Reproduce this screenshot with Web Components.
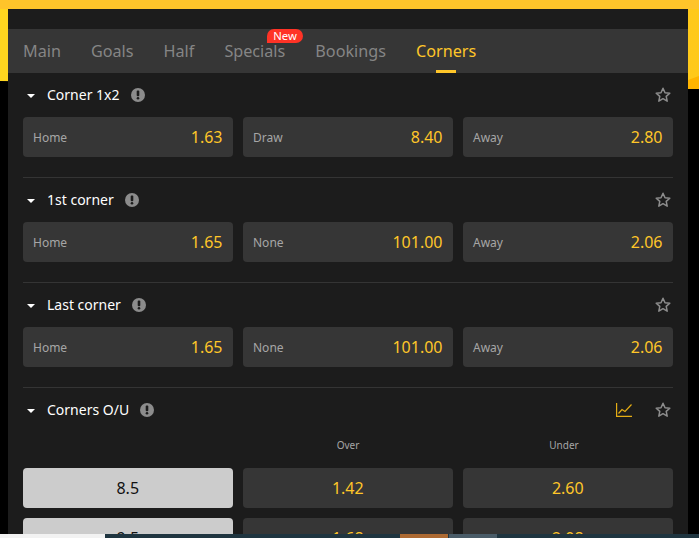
<!DOCTYPE html>
<html>
<head>
<meta charset="utf-8">
<title>Corners</title>
<style>
  html, body { margin: 0; padding: 0; height: 100%; overflow: hidden; background: #000; }
  body { font-family: "Noto Sans", "Open Sans", sans-serif; }
</style>
</head>
<body>
<match-page>
  <market-tabs></market-tabs>
  <market-group name="Corner 1x2">
    <odds-row>
      <odds-cell label="Home" value="1.63"></odds-cell>
      <odds-cell label="Draw" value="8.40"></odds-cell>
      <odds-cell label="Away" value="2.80"></odds-cell>
    </odds-row>
  </market-group>
  <market-group name="1st corner">
    <odds-row>
      <odds-cell label="Home" value="1.65"></odds-cell>
      <odds-cell label="None" value="101.00"></odds-cell>
      <odds-cell label="Away" value="2.06"></odds-cell>
    </odds-row>
  </market-group>
  <market-group name="Last corner">
    <odds-row>
      <odds-cell label="Home" value="1.65"></odds-cell>
      <odds-cell label="None" value="101.00"></odds-cell>
      <odds-cell label="Away" value="2.06"></odds-cell>
    </odds-row>
  </market-group>
  <market-group name="Corners O/U" chart last>
    <odds-row heads>
      <span></span><span>Over</span><span>Under</span>
    </odds-row>
    <odds-row>
      <odds-cell line value="8.5"></odds-cell>
      <odds-cell value="1.42"></odds-cell>
      <odds-cell value="2.60"></odds-cell>
    </odds-row>
    <odds-row>
      <odds-cell line value="9.5"></odds-cell>
      <odds-cell value="1.68"></odds-cell>
      <odds-cell value="2.08"></odds-cell>
    </odds-row>
  </market-group>
</match-page>
<script>
class MatchPage extends HTMLElement {
  constructor() {
    super();
    this.attachShadow({mode: "open"});
    this.shadowRoot.innerHTML = `
    <style>
      :host { display: block; position: relative; height: 538px; overflow: hidden; background: #000; }
      .hero {
        position: absolute; left: 0; top: 0; width: 100%; height: 90px;
        background: linear-gradient(#ffc42a 9px, transparent 9px), linear-gradient(to right, #ffd61f, #ffc91a);
        clip-path: polygon(0 0, 100% 0, 100% 89px, 0 81px);
      }
      .hero::after {
        content: ""; position: absolute; inset: 0; background: #ffb400;
        clip-path: polygon(688px 80px, 699px 76px, 699px 90px, 688px 90px);
      }
      .panel {
        position: relative;
        margin: 9px 11px 0 8px;
        padding-top: 20px;
        height: 529px;
        box-sizing: border-box;
        background: #1c1c1c;
        overflow: hidden;
      }
      .taskbar {
        position: absolute; left: 0; right: 0; bottom: 0; height: 4px;
        display: flex; background: #1f3540;
      }
      .taskbar i { display: block; height: 100%; }
      .taskbar .white { width: 105px; background: #f2f2f2; }
      .taskbar .gap { width: 295px; }
      .taskbar .orange { width: 48px; background: #ad6a33; margin-right: 1px; }
      .taskbar .grey { width: 48px; background: #4a5c68; }
    </style>
    <div class="hero"></div>
    <div class="panel"><slot></slot></div>
    <div class="taskbar"><i class="white"></i><i class="gap"></i><i class="orange"></i><i class="grey"></i></div>
    `;
  }
}

class MarketTabs extends HTMLElement {
  constructor() {
    super();
    this.attachShadow({mode: "open"});
    this.shadowRoot.innerHTML = `
    <style>
      :host { display: flex; height: 44px; gap: 30px; padding-left: 15px; background: #363636; font-size: 16.2px; color: #858585; }
      .tab { position: relative; line-height: 45px; white-space: nowrap; }
      .on { color: #ffc629; }
      .on::after {
        content: ""; position: absolute; left: 50%; bottom: 0; width: 20px; height: 3px;
        margin-left: -10px; background: #ffc629;
      }
      .badge {
        position: absolute; right: -18px; top: 0; height: 14px; padding: 0 6.5px;
        line-height: 14px; font-size: 11.3px; color: #fff; background: #ff3326;
        border-radius: 7px 7px 7px 0;
      }
    </style>
    <div class="tab">Main</div>
    <div class="tab">Goals</div>
    <div class="tab">Half</div>
    <div class="tab">Specials<span class="badge">New</span></div>
    <div class="tab">Bookings</div>
    <div class="tab on">Corners</div>
    `;
  }
}

class MarketGroup extends HTMLElement {
  constructor() {
    super();
    this.attachShadow({mode: "open"});
    const chart = this.hasAttribute("chart") ? `
      <svg class="chart" width="16" height="14" viewBox="0 0 16 14" fill="none" stroke="#e5ad14" stroke-width="1.2">
        <path d="M.6 0V13.4H16"/><path d="M2.5 10.5 6 6.5 9 8.5 15.5 1.5"/>
      </svg>` : "";
    this.shadowRoot.innerHTML = `
    <style>
      :host { display: block; margin: 0 15px; padding-bottom: 20px; border-bottom: 1px solid #343434; }
      :host([last]) { border-bottom: 0; }
      .head { display: flex; align-items: center; height: 44px; color: #fff; font-size: 14px; }
      .caret { width: 0; height: 0; margin: 1px 12px 0 4px; border: 4px solid transparent; border-top-color: #fff; border-bottom: 0; }
      .name { margin-top: -2px; }
      .info { margin: -1px 0 0 11px; }
      .chart { margin-left: auto; margin-right: 23px; }
      .info + .star { margin-left: auto; }
      .star { margin-right: 2px; }
    </style>
    <div class="head">
      <span class="caret"></span>
      <span class="name">${this.getAttribute("name")}</span>
      <svg class="info" width="14" height="14" viewBox="0 0 14 14">
        <circle cx="7" cy="7" r="7" fill="#8c8c8c"/>
        <rect x="5.7" y="2.6" width="2.6" height="5.6" rx="1" fill="#1c1c1c"/>
        <circle cx="7" cy="10.2" r="1.3" fill="#1c1c1c"/>
      </svg>
      ${chart}
      <svg class="star" width="16" height="16" viewBox="0 0 16 16" fill="none" stroke="#8c8c8c" stroke-width="1.5" stroke-linejoin="round">
        <path d="M8 1.3 10 5.7 14.8 6.2 11.2 9.4 12.2 14.2 8 11.7 3.8 14.2 4.8 9.4 1.2 6.2 6 5.7Z"/>
      </svg>
    </div>
    <slot></slot>
    `;
  }
}

class OddsRow extends HTMLElement {
  constructor() {
    super();
    this.attachShadow({mode: "open"});
    this.shadowRoot.innerHTML = `
    <style>
      :host { display: grid; grid-template-columns: repeat(3, 1fr); gap: 10px; margin-bottom: 10px; }
      :host(:last-child) { margin-bottom: 0; }
      :host([heads]) { margin: 5px 0 15px; height: 16px; font-size: 10px; line-height: 16px; color: #a6a6a6; text-align: center; }
      ::slotted(span:last-child) { padding-right: 8px; }
    </style>
    <slot></slot>
    `;
  }
}

class OddsCell extends HTMLElement {
  constructor() {
    super();
    this.attachShadow({mode: "open"});
    const label = this.getAttribute("label");
    this.shadowRoot.innerHTML = `
    <style>
      :host { display: flex; align-items: center; justify-content: center; height: 40px; padding: 0 10.5px 0 10px; box-sizing: border-box; border-radius: 4px; background: #363636; color: #ffc629; font-size: 16px; }
      :host([label]) { justify-content: space-between; }
      :host([line]) { background: #cccccc; color: #111; font-size: 16px; }
      .label { color: #a6a6a6; font-size: 12px; }
    </style>
    ${label ? `<span class="label">${label}</span>` : ""}
    <span>${this.getAttribute("value")}</span>
    `;
  }
}

customElements.define("match-page", MatchPage);
customElements.define("market-tabs", MarketTabs);
customElements.define("market-group", MarketGroup);
customElements.define("odds-row", OddsRow);
customElements.define("odds-cell", OddsCell);
</script>
</body>
</html>
